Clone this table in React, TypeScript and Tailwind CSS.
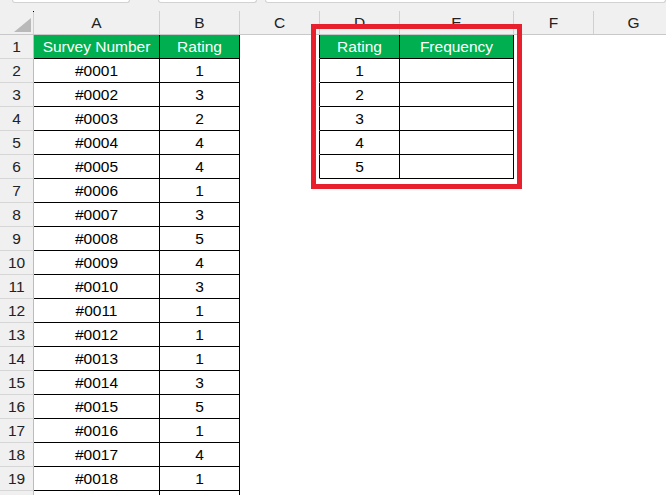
import React from 'react';

const cols = [
  { key: 'A', w: 'w-[126px]' },
  { key: 'B', w: 'w-[80px]' },
  { key: 'C', w: 'w-[80px]' },
  { key: 'D', w: 'w-[80px]' },
  { key: 'E', w: 'w-[114px]' },
  { key: 'F', w: 'w-[80px]' },
  { key: 'G', w: 'w-[80px]' },
];

const ratings = [1, 3, 2, 4, 4, 1, 3, 5, 4, 3, 1, 1, 1, 3, 5, 1, 4, 1];

// cell text and look for a row/column
function cellFor(row: number, col: string) {
  const green = 'bg-[#00b050] text-white';
  if (col === 'A' || col === 'B') {
    const border = 'border-r-black border-b-black';
    if (row === 1) return { text: col === 'A' ? 'Survey Number' : 'Rating', cls: `${green} ${border}` };
    const i = row - 2;
    // last row is cut off by the window, nothing of its text shows
    if (i >= ratings.length) return { text: '', cls: `bg-white ${border}` };
    const text = col === 'A' ? `#${String(i + 1).padStart(4, '0')}` : String(ratings[i]);
    return { text, cls: `bg-white text-black ${border}` };
  }
  if (col === 'C') {
    return { text: '', cls: row <= 6 ? 'bg-white border-r-black border-b-transparent' : 'bg-white border-r-transparent border-b-transparent' };
  }
  if ((col === 'D' || col === 'E') && row <= 6) {
    const border = 'border-r-black border-b-black';
    if (row === 1) return { text: col === 'D' ? 'Rating' : 'Frequency', cls: `${green} ${border}` };
    return { text: col === 'D' ? String(row - 1) : '', cls: `bg-white text-black ${border}` };
  }
  return { text: '', cls: 'bg-white border-r-transparent border-b-transparent' };
}

export default function App() {
  const rows = Array.from({ length: 20 }, (_, i) => i + 1);

  return (
    <div className="relative w-[666px] h-[495px] overflow-hidden bg-white text-[15.5px] font-['Liberation_Sans',Arial,sans-serif]">
      {/* ribbon remnants */}
      <div className="h-[11px] bg-[#f0f0f0] flex items-start">
        <div className="ml-[12px] w-[123px] h-[3px] bg-white border-x border-b border-[#d2d2d2] rounded-b-[4px]" />
        <div className="ml-[28px] w-[104px] h-[3px] bg-white border-x border-b border-[#d2d2d2] rounded-b-[4px]" />
        <div className="ml-[8px] w-[420px] h-[3px] bg-white border-x border-b border-[#d2d2d2] rounded-b-[4px]" />
      </div>

      {/* column headers */}
      <div className="flex h-[24px] bg-[#f0f0f0] border-b border-[#c8c8c8]">
        <div className="relative w-[34px] shrink-0 border-r border-[#d0d0d0]">
          <svg className="absolute left-[14px] top-[7px]" width="17" height="14" viewBox="0 0 17 14">
            <polygon points="17,0 17,14 0,14" fill="#b9b9b9" />
          </svg>
          <div className="absolute right-[-1px] top-0 w-[1px] h-[1px] bg-black" />
        </div>
        {cols.map(c => (
          <div key={c.key} className={`${c.w} shrink-0 border-r border-[#d0d0d0] flex items-center justify-center pt-[1px] text-[#222]`}>
            {c.key}
          </div>
        ))}
      </div>

      {/* grid rows */}
      {rows.map(r => (
        <div key={r} className="flex h-[24px]">
          <div className="w-[34px] shrink-0 bg-[#f0f0f0] border-r border-b border-r-[#bdbdbd] border-b-[#d6d6d6] flex items-center justify-center text-[#222]">
            {r < 20 ? r : ''}
          </div>
          {cols.map(c => {
            const cell = cellFor(r, c.key);
            return (
              <div key={c.key} className={`${c.w} shrink-0 border-r border-b flex items-center justify-center whitespace-nowrap ${cell.cls}`}>
                {cell.text}
              </div>
            );
          })}
        </div>
      ))}

      {/* highlight box */}
      <div className="absolute left-[311px] top-[24px] w-[211px] h-[165px] border-[5px] border-[#e81f2c]" />
    </div>
  );
}
